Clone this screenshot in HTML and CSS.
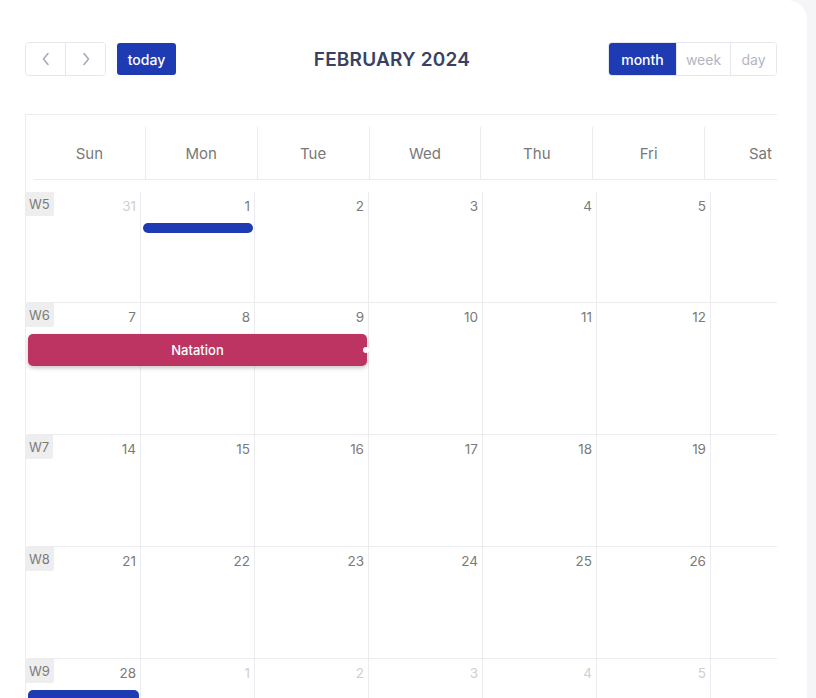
FILE: index.html
```html
<!DOCTYPE html>
<html>
<head>
<meta charset="utf-8">
<link rel="stylesheet" href="styles.css">
</head>
<body>
<div class="card">
  <div class="toolbar">
    <div class="tb-left">
      <div class="btn-group">
        <button class="btn nav-btn" aria-label="prev"><svg width="10" height="14" viewBox="0 0 10 14"><path d="M7 1.5 L2.5 7 L7 12.5" fill="none" stroke="#a9aab8" stroke-width="1.6" stroke-linecap="round" stroke-linejoin="round"/></svg></button>
        <button class="btn nav-btn" aria-label="next"><svg width="10" height="14" viewBox="0 0 10 14"><path d="M3 1.5 L7.5 7 L3 12.5" fill="none" stroke="#a9aab8" stroke-width="1.6" stroke-linecap="round" stroke-linejoin="round"/></svg></button>
      </div>
      <button class="btn today">today</button>
    </div>
    <h2 class="title">FEBRUARY 2024</h2>
    <div class="btn-group views">
      <button class="btn view active v-month">month</button>
      <button class="btn view v-week">week</button>
      <button class="btn view v-day">day</button>
    </div>
  </div>

  <div class="cal">
    <div class="cal-head">
      <div class="head-row">
        <div class="hcell">Sun</div>
        <div class="hcell">Mon</div>
        <div class="hcell">Tue</div>
        <div class="hcell">Wed</div>
        <div class="hcell">Thu</div>
        <div class="hcell">Fri</div>
        <div class="hcell">Sat</div>
      </div>
    </div>
    <div class="cal-body">
      <div class="week h1">
        <div class="cell c1"><div class="ctop"><span class="wk">W5</span><span class="num other">31</span></div></div>
        <div class="cell c2"><div class="ctop"><span class="num">1</span></div></div>
        <div class="cell c3"><div class="ctop"><span class="num">2</span></div></div>
        <div class="cell c4"><div class="ctop"><span class="num">3</span></div></div>
        <div class="cell c5"><div class="ctop"><span class="num">4</span></div></div>
        <div class="cell c6"><div class="ctop"><span class="num">5</span></div></div>
        <div class="cell c7"></div>
        <div class="event bar ev-mon"></div>
      </div>
      <div class="week h2">
        <div class="cell c1"><div class="ctop"><span class="wk">W6</span><span class="num">7</span></div></div>
        <div class="cell c2"><div class="ctop"><span class="num">8</span></div></div>
        <div class="cell c3"><div class="ctop"><span class="num">9</span></div></div>
        <div class="cell c4"><div class="ctop"><span class="num">10</span></div></div>
        <div class="cell c5"><div class="ctop"><span class="num">11</span></div></div>
        <div class="cell c6"><div class="ctop"><span class="num">12</span></div></div>
        <div class="cell c7"></div>
        <div class="event natation">Natation<span class="resizer"></span></div>
      </div>
      <div class="week h3">
        <div class="cell c1"><div class="ctop"><span class="wk">W7</span><span class="num">14</span></div></div>
        <div class="cell c2"><div class="ctop"><span class="num">15</span></div></div>
        <div class="cell c3"><div class="ctop"><span class="num">16</span></div></div>
        <div class="cell c4"><div class="ctop"><span class="num">17</span></div></div>
        <div class="cell c5"><div class="ctop"><span class="num">18</span></div></div>
        <div class="cell c6"><div class="ctop"><span class="num">19</span></div></div>
        <div class="cell c7"></div>
      </div>
      <div class="week h3">
        <div class="cell c1"><div class="ctop"><span class="wk">W8</span><span class="num">21</span></div></div>
        <div class="cell c2"><div class="ctop"><span class="num">22</span></div></div>
        <div class="cell c3"><div class="ctop"><span class="num">23</span></div></div>
        <div class="cell c4"><div class="ctop"><span class="num">24</span></div></div>
        <div class="cell c5"><div class="ctop"><span class="num">25</span></div></div>
        <div class="cell c6"><div class="ctop"><span class="num">26</span></div></div>
        <div class="cell c7"></div>
      </div>
      <div class="week h3">
        <div class="cell c1"><div class="ctop"><span class="wk">W9</span><span class="num">28</span></div></div>
        <div class="cell c2"><div class="ctop"><span class="num other">1</span></div></div>
        <div class="cell c3"><div class="ctop"><span class="num other">2</span></div></div>
        <div class="cell c4"><div class="ctop"><span class="num other">3</span></div></div>
        <div class="cell c5"><div class="ctop"><span class="num other">4</span></div></div>
        <div class="cell c6"><div class="ctop"><span class="num other">5</span></div></div>
        <div class="cell c7"></div>
        <div class="event bar ev-sun"></div>
      </div>
    </div>
  </div>
</div>
</body>
</html>
```
FILE: styles.css
```css
* { box-sizing: border-box; }
html, body { margin: 0; padding: 0; }
body {
  background: #f5f5f8;
  font-family: Inter, "Noto Sans", sans-serif;
  width: 816px;
  height: 698px;
  overflow: hidden;
}
.card {
  width: 807px;
  height: 698px;
  background: #fff;
  border-top-right-radius: 20px;
  padding: 42px 30px 0 25px;
  overflow: hidden;
}
.toolbar {
  display: flex;
  align-items: center;
  justify-content: space-between;
  height: 34px;
}
.tb-left { display: flex; align-items: center; }
.btn {
  font-family: inherit;
  margin: 0;
  padding: 0;
  cursor: pointer;
  background: #fff;
  display: flex;
  align-items: center;
  justify-content: center;
}
.btn-group {
  display: flex;
  height: 34px;
  border: 1px solid #e6e6ee;
  border-radius: 4px;
  overflow: hidden;
}
.nav-btn {
  width: 39px;
  height: 32px;
  border: none;
}
.nav-btn + .nav-btn { border-left: 1px solid #e6e6ee; width: 40px; }
.today {
  margin-left: 11px;
  width: 59px;
  height: 32px;
  border: none;
  border-radius: 3px;
  background: #1f3bb3;
  color: #fff;
  font-size: 14px;
  font-weight: 500;
}
.title {
  margin: 0;
  font-size: 19px;
  font-weight: 600;
  color: #394163;
  letter-spacing: 0.2px;
}
.view {
  height: 32px;
  border: none;
  font-size: 14px;
  color: #b4b5c3;
}
.view + .view { border-left: 1px solid #e6e6ee; }
.v-month { width: 67px; }
.v-week { width: 54px; }
.v-day { width: 46px; }
.view.active {
  background: #1f3bb3;
  color: #fff;
  font-weight: 500;
}

.cal {
  margin-top: 38px;
  width: 752px;
  border-top: 1px solid #ebebf0;
  border-left: 1px solid #ebebf0;
  overflow: hidden;
}
.cal-head {
  height: 65px;
  padding: 12px 0 0 8px;
}
.head-row {
  display: flex;
  width: 783px;
  height: 53px;
  border-bottom: 1px solid #ebebf0;
}
.hcell {
  flex: 0 0 111.85px;
  border-right: 1px solid #ebebf0;
  display: flex;
  align-items: center;
  justify-content: center;
  font-size: 15px;
  color: #787878;
}
.cal-body {
  margin-top: 12px;
  padding-left: 1px;
}
.week {
  width: 800px;
  display: grid;
  grid-template-columns: repeat(7, 114px);
  grid-template-rows: 31px auto 1fr;
  border-bottom: 1px solid #ebebf0;
}
.week.h1 { height: 111px; }
.week.h2 { height: 132px; }
.week.h3 { height: 112px; }
.cell {
  grid-row: 1 / 4;
  border-right: 1px solid #ebebf0;
}
.c1 { grid-column: 1; }
.c2 { grid-column: 2; }
.c3 { grid-column: 3; }
.c4 { grid-column: 4; }
.c5 { grid-column: 5; }
.c6 { grid-column: 6; }
.c7 { grid-column: 7; }
.ctop {
  display: flex;
  justify-content: space-between;
  align-items: flex-start;
}
.wk {
  margin-left: -1px;
  height: 24px;
  line-height: 24px;
  padding: 0 4px 0 3px;
  background: #eeeeee;
  border-bottom-right-radius: 2px;
  font-size: 13px;
  color: #7a7a7a;
}
.num {
  margin-left: auto;
  padding: 4px 4px 0 0;
  line-height: 20px;
  font-size: 13.5px;
  color: #7a7a7a;
}
.num.other { color: #cfcfcf; }
.event {
  grid-row: 2;
  position: relative;
  border-radius: 5px;
}
.bar {
  height: 10px;
  background: #1f3bb3;
}
.ev-mon { grid-column: 2; margin: 0 2px 0 2px; }
.ev-sun { grid-column: 1; margin: 0 2px 0 1px; height: 14px; }
.natation {
  grid-column: 1 / 4;
  margin: 0 2px 0 1px;
  height: 32px;
  background: #bd3463;
  color: #fff;
  font-size: 13px;
  font-weight: 500;
  display: flex;
  align-items: center;
  justify-content: center;
  box-shadow: 0 2px 4px rgba(0, 0, 0, 0.22);
}
.resizer {
  position: absolute;
  right: -2px;
  top: 13px;
  width: 6px;
  height: 6px;
  border-radius: 50%;
  background: #fff;
}
```
